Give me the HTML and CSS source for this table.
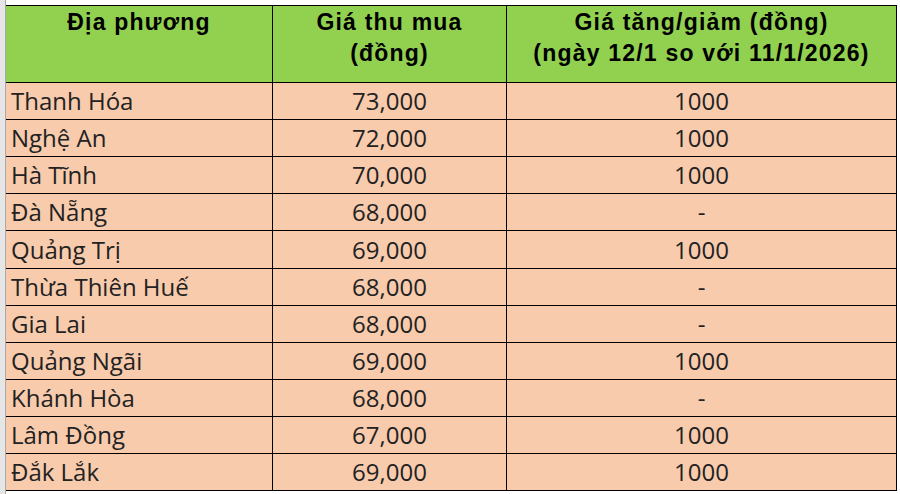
FILE: index.html
```html
<!DOCTYPE html>
<html lang="vi">
<head>
<meta charset="utf-8">
<title>Giá thu mua</title>
<link rel="stylesheet" href="styles.css">
</head>
<body>
<div class="sheet">
  <div class="rowhdr"></div>
  <div class="main">
    <table class="grid">
      <thead>
        <tr>
          <th class="c1">Địa phương</th>
          <th class="c2">Giá thu mua<br>(đồng)</th>
          <th class="c3">Giá tăng/giảm (đồng)<br>(ngày 12/1 so với 11/1/2026)</th>
        </tr>
      </thead>
      <tbody>
        <tr><td class="name">Thanh Hóa</td><td class="num">73,000</td><td class="num">1000</td></tr>
        <tr><td class="name">Nghệ An</td><td class="num">72,000</td><td class="num">1000</td></tr>
        <tr><td class="name">Hà Tĩnh</td><td class="num">70,000</td><td class="num">1000</td></tr>
        <tr><td class="name">Đà Nẵng</td><td class="num">68,000</td><td class="num">-</td></tr>
        <tr class="tall"><td class="name">Quảng Trị</td><td class="num">69,000</td><td class="num">1000</td></tr>
        <tr><td class="name">Thừa Thiên Huế</td><td class="num">68,000</td><td class="num">-</td></tr>
        <tr><td class="name">Gia Lai</td><td class="num">68,000</td><td class="num">-</td></tr>
        <tr><td class="name">Quảng Ngãi</td><td class="num">69,000</td><td class="num">1000</td></tr>
        <tr><td class="name">Khánh Hòa</td><td class="num">68,000</td><td class="num">-</td></tr>
        <tr><td class="name">Lâm Đồng</td><td class="num">67,000</td><td class="num">1000</td></tr>
        <tr><td class="name">Đắk Lắk</td><td class="num">69,000</td><td class="num">1000</td></tr>
      </tbody>
    </table>
  </div>
</div>
</body>
</html>
```

FILE: styles.css
```css
html, body {
  margin: 0;
  padding: 0;
  background: #ffffff;
}

.sheet {
  display: flex;
  width: 900px;
  height: 494px;
  overflow: hidden;
}

.rowhdr {
  width: 5px;
  flex: 0 0 5px;
  background: #e6e6e6;
  border-right: 1px solid #a9a9a9;
}

.main {
  padding-top: 5px;
}

.grid {
  border-collapse: separate;
  border-spacing: 0;
  table-layout: fixed;
  width: 891px;
  border-top: 1px solid #000;
}

.grid th,
.grid td {
  box-sizing: border-box;
  border-right: 1px solid #000;
  border-bottom: 1px solid #000;
  padding: 0;
}

.grid th {
  height: 77px;
  background: #92d050;
  color: #000;
  font-family: "Liberation Sans", Arial, sans-serif;
  font-weight: bold;
  font-size: 23px;
  letter-spacing: 1.2px;
  line-height: 31px;
  text-align: center;
  vertical-align: top;
  padding-top: 1px;
}

.grid .c1 { width: 267px; }
.grid .c2 { width: 234px; }
.grid .c3 { width: 390px; }

.grid td {
  height: 37px;
  background: #f8cbad;
  color: #222222;
  font-family: "Open Sans", sans-serif;
  font-size: 24px;
  line-height: 36px;
  vertical-align: middle;
  white-space: nowrap;
}

.grid tr.tall td {
  height: 38px;
}

.grid td.name {
  text-align: left;
  padding-left: 5px;
}

.grid td.num {
  text-align: center;
}
```
